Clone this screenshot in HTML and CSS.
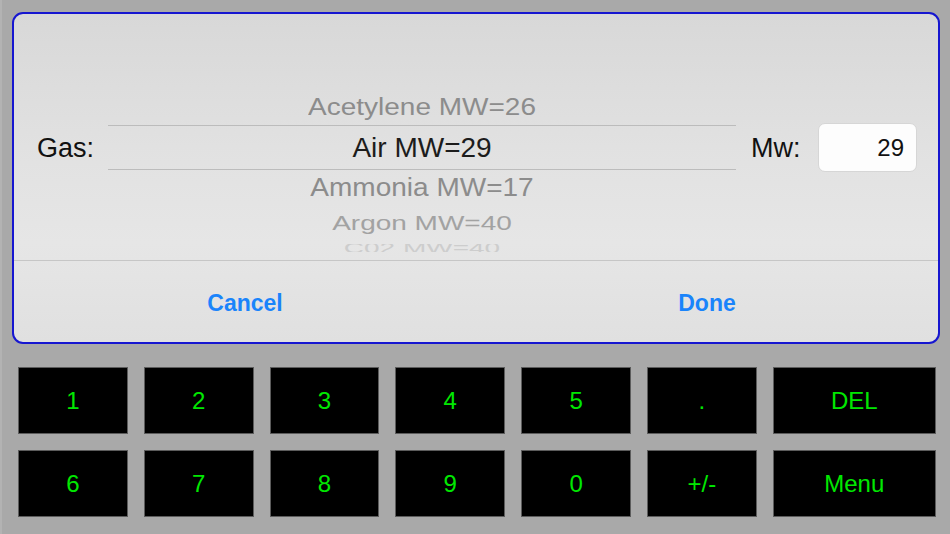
FILE: index.html
```html
<!DOCTYPE html>
<html lang="en">
<head>
<meta charset="utf-8">
<title>Gas picker</title>
<link rel="stylesheet" href="styles.css">
</head>
<body>
<div class="screen">
  <div class="dialog">
    <div class="main">
      <div class="label gas">Gas:</div>
      <div class="item r1">Acetylene MW=26</div>
      <div class="item r2 selected">Air MW=29</div>
      <div class="item r3">Ammonia MW=17</div>
      <div class="item r4">Argon MW=40</div>
      <div class="item r5">C02 MW=40</div>
      <div class="label mw">Mw:</div>
      <div class="input">29</div>
    </div>
    <div class="actions">
      <div class="action">Cancel</div>
      <div class="action">Done</div>
    </div>
  </div>
  <div class="keypad">
    <div class="key">1</div>
    <div class="key">2</div>
    <div class="key">3</div>
    <div class="key">4</div>
    <div class="key">5</div>
    <div class="key">.</div>
    <div class="key">DEL</div>
    <div class="key">6</div>
    <div class="key">7</div>
    <div class="key">8</div>
    <div class="key">9</div>
    <div class="key">0</div>
    <div class="key">+/-</div>
    <div class="key">Menu</div>
  </div>
</div>
</body>
</html>
```

FILE: styles.css
```css
* { box-sizing: border-box; }
html, body {
  margin: 0;
  padding: 0;
  background: #a9a9a9;
  font-family: "Liberation Sans", Arial, sans-serif;
}
.screen {
  width: 950px;
  height: 534px;
  padding: 12px 10px 0 10px;
  border-left: 2px solid #b3b3b3;
  overflow: hidden;
}
.dialog {
  width: 928px;
  height: 332px;
  border: 2px solid #1616d0;
  border-radius: 11px;
  background: linear-gradient(#d8d8d8 0%, #e2e2e2 45%, #e6e6e6 70%, #e0e0e0 100%);
  overflow: hidden;
}
.main {
  height: 247px;
  padding: 74px 0 0 23px;
  display: grid;
  grid-template-columns: 71px 628px 82px 99px;
  grid-template-rows: 37px 45px 36px 34px 16px;
  overflow: hidden;
  border-bottom: 1px solid #c6c6c6;
}
.label {
  grid-row: 2;
  font-size: 27px;
  color: #111;
  align-self: center;
  line-height: 30px;
}
.gas { grid-column: 1; }
.mw { grid-column: 3; padding-left: 15px; }
.input {
  grid-column: 4;
  grid-row: 2;
  align-self: center;
  height: 49px;
  background: #fdfdfd;
  border: 1px solid #d6d6d6;
  border-radius: 7px;
  font-size: 24px;
  color: #111;
  text-align: right;
  padding-right: 12px;
  line-height: 47px;
}
.item {
  grid-column: 2;
  text-align: center;
  font-size: 28px;
  white-space: nowrap;
  color: #8c8c8c;
}
.r1 { grid-row: 1; line-height: 37px; transform: scaleY(0.88); }
.r2 { grid-row: 2; line-height: 43px; }
.r3 { grid-row: 3; line-height: 36px; transform: scaleY(0.9); }
.r4 { grid-row: 4; line-height: 34px; transform: scaleY(0.75); color: #a2a2a2; }
.r5 { grid-row: 5; line-height: 16px; transform: scaleY(0.5); color: #cdcdcd; overflow: hidden; }
.selected {
  color: #1c1c1c;
  border-top: 1px solid #bcbcbc;
  border-bottom: 1px solid #bcbcbc;
}
.actions {
  display: flex;
  height: 80px;
  padding-top: 4px;
}
.action {
  flex: 1;
  display: flex;
  align-items: center;
  justify-content: center;
  font-size: 23px;
  font-weight: bold;
  color: #1a84fb;
}
.keypad {
  margin: 23px 0 0 6px;
  display: grid;
  grid-template-columns: repeat(6, 109.8px) 163px;
  grid-auto-rows: 66.5px;
  column-gap: 16px;
  row-gap: 16.5px;
}
.key {
  background: #000;
  border: 1px solid #5c5c5c;
  color: #00e800;
  font-size: 24px;
  padding-top: 2px;
  display: flex;
  align-items: center;
  justify-content: center;
}
```
